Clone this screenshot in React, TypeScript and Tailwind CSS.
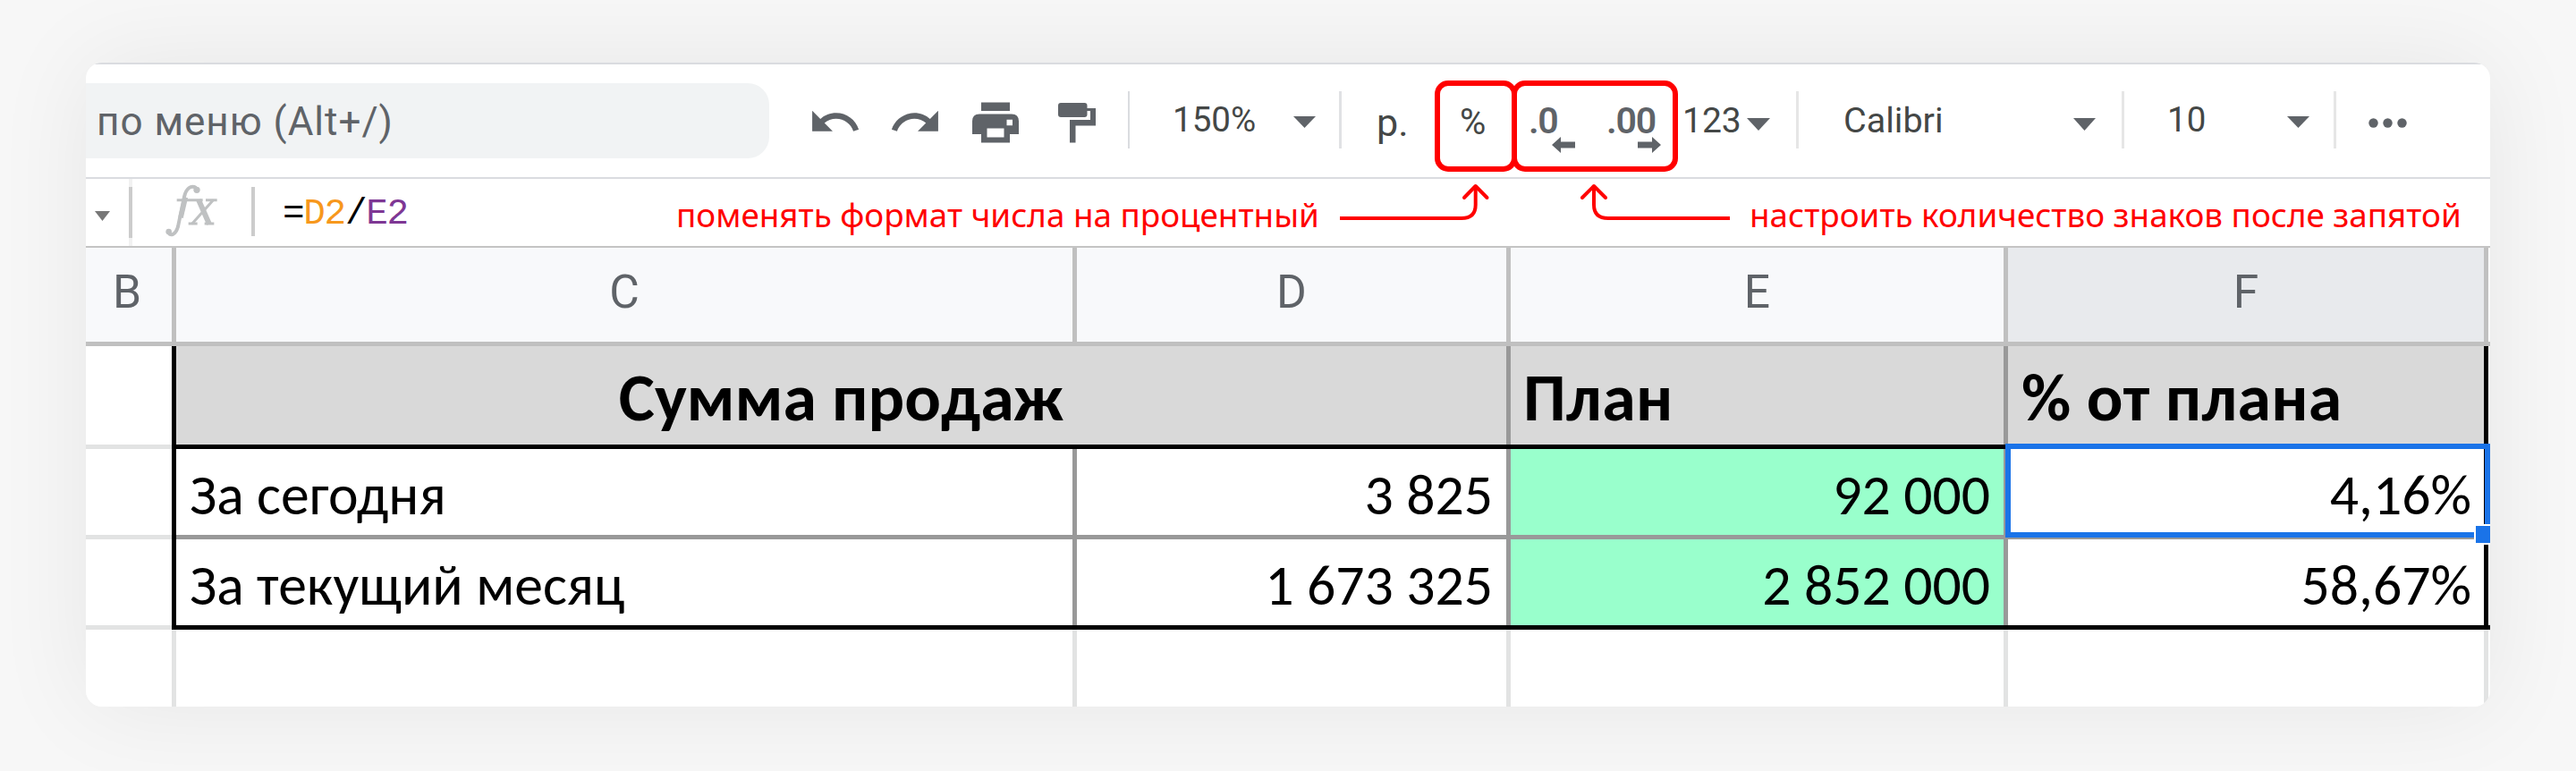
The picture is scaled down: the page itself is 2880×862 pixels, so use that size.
import type { ReactNode } from "react";

const ROBOTO = "font-['Roboto',sans-serif]";
const CALIBRI = "font-['Carlito','Calibri','Lato',sans-serif]";

function Caret({ className }: { className: string }) {
  return (
    <svg viewBox="0 0 24 12" preserveAspectRatio="none" className={`shrink-0 ${className}`}>
      <path d="M0 0h24L12 12z" fill="currentColor" />
    </svg>
  );
}

function Separator({ className }: { className: string }) {
  return <div className={`mt-[30px] h-16 shrink-0 ${className}`} />;
}

function Label({ className, children }: { className: string; children: ReactNode }) {
  return (
    <span className={`shrink-0 leading-[40px] whitespace-nowrap text-[#444746] ${className}`}>
      {children}
    </span>
  );
}

function Toolbar() {
  return (
    <div className={`flex h-[126px] items-start text-[#5f6368] ${ROBOTO}`}>
      <div className="mt-[21px] flex h-[84px] w-[764px] shrink-0 items-center rounded-r-[24px] bg-[#f1f3f4] pl-[12px] text-[44px] leading-[84px] tracking-[1px] whitespace-nowrap">
        <span className="pt-[2px]">по меню (Alt+/)</span>
      </div>
      <svg viewBox="0 0 24 24" className="mt-[34px] ml-[43px] size-[61px] shrink-0" fill="currentColor">
        <path d="M12.5 8c-2.65 0-5.05.99-6.9 2.6L2 7v9h9l-3.62-3.62c1.39-1.16 3.16-1.88 5.12-1.88 3.54 0 6.55 2.31 7.6 5.5l2.37-.78C21.08 11.03 17.15 8 12.5 8z" />
      </svg>
      <svg viewBox="0 0 24 24" className="mt-[34px] ml-[29px] size-[61px] shrink-0" fill="currentColor">
        <path d="M18.4 10.6C16.55 8.99 14.15 8 11.5 8c-4.65 0-8.58 3.03-9.96 7.22L3.9 16c1.05-3.19 4.05-5.5 7.6-5.5 1.95 0 3.73.72 5.12 1.88L13 16h9V7l-3.6 3.6z" />
      </svg>
      <svg viewBox="0 0 52 46" className="mt-[42px] ml-[33px] h-[46px] w-[52px] shrink-0" fill="currentColor">
        <path d="M10 0.500h32V10H10z" />
        <path
          fillRule="evenodd"
          d="M8 13.500H44Q52 13.500 52 21.500V36H42V45.500H10V36H0V21.500Q0 13.500 8 13.500zM16.500 29.500H35.500V39.500H16.500zM38.500 19.800H45V26.300H38.500z"
        />
      </svg>
      <svg viewBox="0 0 44 48" className="mt-[42px] ml-[43px] h-[48px] w-[44px] shrink-0" fill="currentColor">
        <rect x="1" y="1" width="32.500" height="16" rx="3" />
        <path d="M33 7h10v19.500H20.500V45.500H14V20h23V10h-4z" />
      </svg>
      <Separator className="ml-[35px] w-[2px] bg-[#dadce0]" />
      <Label className="mt-[42px] ml-[48px] w-[100px] text-[38.5px]">150%</Label>
      <Caret className="mt-[58px] ml-[35px] h-[13px] w-[25px]" />
      <Separator className="ml-[26px] w-[3px] bg-[#e0e1e4]" />
      <Label className="mt-[45px] ml-[39px] w-[39px] text-[43px]">р.</Label>
      <Label className="mt-[45px] ml-[54px] w-[34px] text-[40px]">%</Label>
      <div className="mt-[43px] ml-[43px] flex w-[54px] shrink-0 flex-col">
        <span className="text-[41px] leading-[40px] font-semibold tracking-[-1.300px]">.0</span>
        <svg viewBox="0 0 26 18" className="mt-[-2px] ml-[26px] h-[18px] w-[26px]" fill="currentColor">
          <path d="M0 9L10 0v5.500h16v7H10V18z" />
        </svg>
      </div>
      <div className="mt-[43px] ml-[33px] flex w-[65px] shrink-0 flex-col">
        <span className="text-[41px] leading-[40px] font-semibold tracking-[-1.200px]">.00</span>
        <svg viewBox="0 0 26 18" className="mt-[-2px] ml-[35px] h-[18px] w-[26px]" fill="currentColor">
          <path d="M26 9L16 0v5.500H0v7h16V18z" />
        </svg>
      </div>
      <Label className="mt-[43px] ml-[20px] w-[68px] text-[39px]">123</Label>
      <Caret className="mt-[60px] ml-[4px] h-[14px] w-[26px]" />
      <Separator className="ml-[29px] w-[3px] bg-[#e6e6e6]" />
      <Label className="mt-[43px] ml-[50px] w-[115px] text-[39.5px]">Calibri</Label>
      <Caret className="mt-[60px] ml-[142px] h-[14px] w-[25px]" />
      <Separator className="ml-[29px] w-[3px] bg-[#e6e6e6]" />
      <Label className="mt-[42px] ml-[48px] w-[47px] text-[38.5px]">10</Label>
      <Caret className="mt-[58px] ml-[87px] h-[13px] w-[25px]" />
      <Separator className="ml-[27px] w-[3px] bg-[#e6e6e6]" />
      <svg viewBox="0 0 43 11" className="mt-[60px] ml-[36px] h-[11px] w-[43px] shrink-0" fill="currentColor">
        <circle cx="5.500" cy="5.500" r="5.200" />
        <circle cx="21.500" cy="5.500" r="5.200" />
        <circle cx="37.500" cy="5.500" r="5.200" />
      </svg>
    </div>
  );
}

function FormulaBar() {
  return (
    <div className="flex h-[75px] items-start">
      <Caret className="mt-[36px] ml-[10px] h-[11px] w-[17px] text-[#777777]" />
      <div className="ml-[21px] flex h-[75px] w-[4px] shrink-0 flex-col bg-[#f1f1f1] pt-[9px]">
        <div className="h-[57px] bg-[#cccccc]" />
      </div>
      <svg viewBox="280 45 180 180" className="mt-[5px] ml-[36px] size-[60px] shrink-0 text-[#bfc1c2]" fill="none" stroke="currentColor">
        <path d="M292 209C300 222 316 220 325 190L346 90C352 62 368 50 386 60" strokeWidth="12" />
        <path d="M334 160L350 92" strokeWidth="17" />
        <circle cx="294" cy="207" r="10" fill="currentColor" stroke="none" />
        <circle cx="388" cy="67" r="11" fill="currentColor" stroke="none" />
        <path d="M321 101H408M418 101H456M360 180H390M414 180H446" strokeWidth="9" />
        <path d="M394 100L430 182" strokeWidth="18" />
        <path d="M443 101L372 181" strokeWidth="9" />
      </svg>
      <div className="mt-[9px] ml-[37px] h-[55px] w-[4px] shrink-0 bg-[#cccccc]" />
      <div className="mt-[19px] ml-[31px] font-['Liberation_Mono',monospace] text-[41px] leading-[40px] tracking-[-1.300px] text-black">
        =<span className="text-[#f7981d]">D2</span>/<span className="text-[#7e3794]">E2</span>
      </div>
    </div>
  );
}

const WIDTHS = {
  b: "w-[96px]",
  c: "w-[1002px]",
  d: "w-[480px]",
  e: "w-[551px]",
  f: "w-[532px]",
  cd: "w-[1487px]",
};

function Cell({ col, className = "", children }: { col: keyof typeof WIDTHS; className?: string; children?: ReactNode }) {
  return <div className={`flex h-full shrink-0 items-center whitespace-nowrap ${WIDTHS[col]} ${className}`}>{children}</div>;
}

function Line({ className }: { className: string }) {
  return <div className={`h-full w-[5px] shrink-0 ${className}`} />;
}

function HeaderRow() {
  const cell = "justify-center pb-[6px] bg-[#f8f9fb]";
  return (
    <div className={`flex h-[105px] text-[51.5px] text-[#5f6368] ${ROBOTO}`}>
      <Cell col="b" className="justify-center bg-[#f8f9fb] pr-[4px] pb-[6px]">B</Cell>
      <Line className="bg-[#c0c0c0]" />
      <Cell col="c" className={cell}>C</Cell>
      <Line className="bg-[#c0c0c0]" />
      <Cell col="d" className={cell}>D</Cell>
      <Line className="bg-[#c0c0c0]" />
      <Cell col="e" className={cell}>E</Cell>
      <Line className="bg-[#c0c0c0]" />
      <Cell col="f" className="justify-center bg-[#e8eaed] pb-[6px]">F</Cell>
      <Line className="bg-[#c0c0c0]" />
    </div>
  );
}

function DataRow({ label, fact, plan, percent }: { label: string; fact: string; plan: string; percent: string }) {
  return (
    <div className="flex h-[96px] text-[63.7px] leading-[80px]">
      <Cell col="b" />
      <Line className="bg-black" />
      <Cell col="c" className="pt-[5px] pl-[15px]">{label}</Cell>
      <Line className="bg-[#999999]" />
      <Cell col="d" className="justify-end pt-[5px] pr-[15px]">{fact}</Cell>
      <Line className="bg-[#999999]" />
      <Cell col="e" className="justify-end bg-[#99ffcc] pt-[5px] pr-[15px]">{plan}</Cell>
      <Line className="bg-[#999999]" />
      <Cell col="f" className="justify-end pt-[5px] pr-[14px]">{percent}</Cell>
      <Line className="bg-black" />
    </div>
  );
}

function Rule({ stub, joint, main }: { stub: string; joint: string; main: string }) {
  return (
    <div className="flex h-[5px]">
      <div className={`w-[96px] shrink-0 ${stub}`} />
      <div className={`w-[5px] shrink-0 ${joint}`} />
      <div className={`flex-1 ${main}`} />
    </div>
  );
}

function Sheet() {
  return (
    <div className={`relative text-black ${CALIBRI}`}>
      <div className="h-[2px] bg-[#c4c4c4]" />
      <HeaderRow />
      <div className="h-[5px] bg-[#c0c0c0]" />
      <div className="flex h-[110px] text-[75.8px] leading-[90px] font-bold">
        <Cell col="b" />
        <Line className="bg-black" />
        <Cell col="cd" className="justify-center bg-[#d9d9d9] pt-[4px]">Сумма продаж</Cell>
        <Line className="bg-[#999999]" />
        <Cell col="e" className="bg-[#d9d9d9] pt-[4px] pl-[14px] tracking-[0.3px]">План</Cell>
        <Line className="bg-[#999999]" />
        <Cell col="f" className="bg-[#d9d9d9] pt-[4px] pl-[15px] tracking-[0.2px]">% от плана</Cell>
        <Line className="bg-black" />
      </div>
      <Rule stub="bg-[#e2e3e3]" joint="bg-black" main="bg-black" />
      <DataRow label="За сегодня" fact="3 825" plan="92 000" percent="4,16%" />
      <Rule stub="bg-[#e2e3e3]" joint="bg-black" main="bg-[#999999]" />
      <DataRow label="За текущий месяц" fact="1 673 325" plan="2 852 000" percent="58,67%" />
      <Rule stub="bg-[#e2e3e3]" joint="bg-black" main="bg-black" />
      <div className="flex h-[86px]">
        <Cell col="b" />
        <Line className="bg-[#e2e3e3]" />
        <Cell col="c" />
        <Line className="bg-[#e2e3e3]" />
        <Cell col="d" />
        <Line className="bg-[#e2e3e3]" />
        <Cell col="e" />
        <Line className="bg-[#e2e3e3]" />
        <Cell col="f" />
        <Line className="bg-[#e2e3e3]" />
      </div>
      <div className="absolute top-[221px] left-[2146px] h-[105px] w-[542px] border-[6px] border-[#1a73e8]" />
      <div className="absolute top-[311px] left-[2670px] h-[23px] w-[26px] border-2 border-white bg-[#1a73e8]" />
    </div>
  );
}

function Annotations() {
  const note = "absolute top-[140px] leading-[60px] whitespace-nowrap text-[#ff0000] font-['Noto_Sans',sans-serif]";
  return (
    <>
      <div className="absolute top-[20px] left-[1508px] h-[102px] w-[92px] rounded-[15px] border-[6px] border-[#ff0000]" />
      <div className="absolute top-[20px] left-[1594px] h-[102px] w-[186px] rounded-[15px] border-[6px] border-[#ff0000]" />
      <span className={`${note} left-[660px] text-[36.8px]`}>поменять формат числа на процентный</span>
      <span className={`${note} left-[1860px] text-[36.8px]`}>настроить количество знаков после запятой</span>
      <svg viewBox="1490 200 450 52" className="absolute top-[130px] left-[1394px] h-[52px] w-[450px]" fill="none" stroke="#ff0000" strokeWidth="4" strokeLinejoin="round">
        <path d="M1498 244H1634Q1649.700 244 1649.700 229V209" />
        <path d="M1637 221L1649.700 208L1662.500 221" strokeLinecap="round" />
        <path d="M1934 244H1798Q1782 244 1782 229V209" />
        <path d="M1769 221L1782 208L1795 221" strokeLinecap="round" />
      </svg>
    </>
  );
}

export default function App() {
  return (
    <div className="h-[862px] w-[2880px] overflow-hidden bg-[#f7f7f7] px-[96px] pt-[70px]">
      <div className="h-[720px] rounded-[18px] shadow-[0_0_110px_rgba(0,0,0,0.07)]">
        <div className="relative h-[720px] overflow-hidden rounded-[18px] bg-white">
          <div className="h-[2px] bg-[#dadce0]" />
          <Toolbar />
          <div className="h-[2px] bg-[#dadce0]" />
          <FormulaBar />
          <Sheet />
          <Annotations />
        </div>
      </div>
    </div>
  );
}
